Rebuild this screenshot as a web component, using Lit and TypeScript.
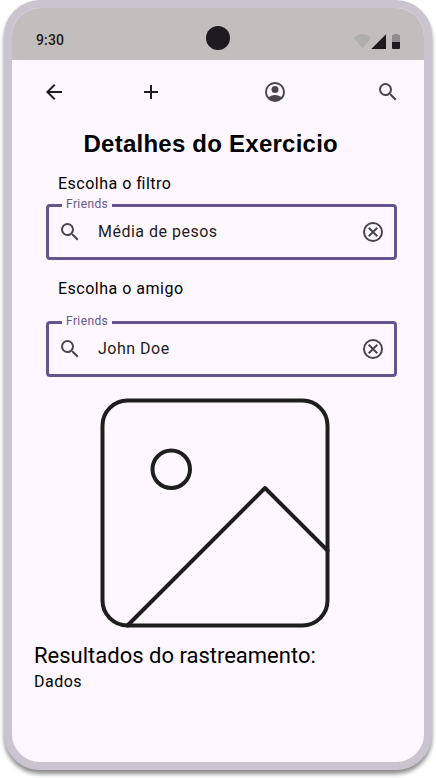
import { LitElement, html, css, svg } from "lit";
import { customElement, property } from "lit/decorators.js";

const searchIcon = svg`<path d="M15.5 14h-.79l-.28-.27A6.47 6.47 0 0 0 16 9.5 6.5 6.5 0 1 0 9.5 16c1.61 0 3.09-.59 4.23-1.57l.27.28v.79l5 4.99L20.49 19l-4.99-5zm-6 0C7.01 14 5 11.99 5 9.5S7.01 5 9.5 5 14 7.01 14 9.5 11.99 14 9.5 14z"/>`;

@customElement("outlined-field")
export class OutlinedField extends LitElement {
  @property() label = "";
  @property() value = "";

  static styles = css`
    :host {
      display: block;
      font-family: Roboto, sans-serif;
    }
    .box {
      position: relative;
      box-sizing: border-box;
      height: 56px;
      border: 3px solid #65558f;
      border-radius: 4px;
      display: flex;
      align-items: center;
      padding: 0 9px;
    }
    .label {
      position: absolute;
      left: 13px;
      top: -11px;
      width: 50px;
      box-sizing: border-box;
      padding-left: 4px;
      background: #fef7ff;
      color: #65558f;
      font-size: 12px;
      line-height: 16px;
      letter-spacing: 0.4px;
      white-space: nowrap;
    }
    .icon {
      width: 24px;
      height: 24px;
      fill: #49454f;
      flex: none;
    }
    .value {
      flex: 1;
      margin-left: 16px;
      font-size: 16px;
      line-height: 24px;
      letter-spacing: 0.5px;
      color: #1d1b20;
    }
  `;

  render() {
    return html`
      <div class="box">
        <span class="label">${this.label}</span>
        <svg class="icon" viewBox="0 0 24 24">${searchIcon}</svg>
        <span class="value">${this.value}</span>
        <svg class="icon" viewBox="0 0 24 24">
          <path d="M8.4 17 12 13.4 15.6 17 17 15.6 13.4 12 17 8.4 15.6 7 12 10.6 8.4 7 7 8.4 10.6 12 7 15.6zM12 22a10 10 0 1 1 0-20 10 10 0 0 1 0 20zm0-2a8 8 0 1 0 0-16 8 8 0 0 0 0 16z" fill-rule="evenodd"/>
        </svg>
      </div>
    `;
  }
}

@customElement("app-root")
export class AppRoot extends LitElement {
  static styles = css`
    :host {
      display: block;
      height: 778px;
      overflow: hidden;
      background: #fff;
      font-family: Roboto, sans-serif;
      color: #000;
    }
    .phone {
      box-sizing: border-box;
      width: 428px;
      height: 770px;
      margin: 0 4px;
      border: 8px solid #cac4d0;
      border-radius: 36px;
      background: #fef7ff;
      box-shadow: 0 4px 4px rgba(0, 0, 0, 0.45);
    }
    .screen {
      height: 100%;
      border-radius: 28px;
      overflow: hidden;
      display: flex;
      flex-direction: column;
    }
    .status {
      flex: none;
      height: 52px;
      box-sizing: border-box;
      padding: 18px 24px 10px;
      background: #c2bebd;
      display: grid;
      grid-template-columns: 1fr 24px 1fr;
      align-items: start;
    }
    .time {
      font-size: 14px;
      line-height: 20px;
      letter-spacing: 0.14px;
      font-weight: 500;
      color: #1d1b20;
      padding-top: 4px;
    }
    .camera {
      width: 24px;
      height: 24px;
      border-radius: 50%;
      background: #1d1b20;
    }
    .signals {
      justify-self: end;
      width: 46px;
      height: 17px;
      margin-top: 7px;
    }
    .bar {
      flex: none;
      height: 64px;
      box-sizing: border-box;
      padding: 0 24px 0 30px;
      display: flex;
      align-items: center;
    }
    .bar svg {
      width: 24px;
      height: 24px;
      fill: #49454f;
    }
    .bar .dark {
      fill: #1d1b20;
    }
    .plus {
      margin-left: 73px;
    }
    .person {
      margin-left: 100px;
    }
    .find {
      margin-left: 89px;
    }
    h1 {
      margin: 4px 0 0 71.5px;
      font: bold 24px/32px "Liberation Sans", Arial, sans-serif;
      letter-spacing: 0.24px;
      white-space: nowrap;
    }
    .prompt {
      margin: 12px 0 8px 46px;
      font-size: 16px;
      line-height: 24px;
      letter-spacing: 0.5px;
    }
    .prompt.friend {
      margin: 17px 0 20px 46px;
    }
    .tight {
      letter-spacing: -0.4px;
    }
    outlined-field {
      margin: 0 27px 0 34px;
    }
    .image {
      flex: none;
      width: 230px;
      height: 230px;
      margin: 21px 0 0 88px;
      fill: none;
      stroke: #1e1e1e;
      stroke-width: 4;
      stroke-linecap: round;
      stroke-linejoin: round;
    }
    h2 {
      margin: 14px 0 0 22px;
      font-size: 22px;
      line-height: 28px;
      font-weight: 400;
    }
    .data {
      margin: 0 0 0 22px;
      font-size: 16px;
      line-height: 24px;
      letter-spacing: 0.5px;
    }
  `;

  render() {
    return html`
      <div class="phone">
        <div class="screen">
          <div class="status">
            <span class="time">9:30</span>
            <span class="camera"></span>
            <svg class="signals" viewBox="0 0 46 17">
              <path d="M0 4.8C2.4 2.4 5.4 1 8.5 1s6.1 1.4 8.5 3.8L8.5 15.4z" fill="#aeaeac"/>
              <path d="M17.5 16V15.7L32 1.2V16z" fill="#1d1b20"/>
              <path d="M38 9V3q0-1 1-1h1V1h4v1h1q1 0 1 1v6z" fill="#1d1b20" opacity=".3"/>
              <path d="M38 9h8v6q0 1-1 1h-6q-1 0-1-1z" fill="#1d1b20"/>
            </svg>
          </div>
          <div class="bar">
            <svg class="dark" viewBox="0 0 24 24">
              <path d="M7.825 13 13.425 18.6 12 20 4 12 12 4 13.425 5.4 7.825 11H20V13z"/>
            </svg>
            <svg class="dark plus" viewBox="0 0 24 24">
              <path d="M11 13H5V11H11V5H13V11H19V13H13V19H11z"/>
            </svg>
            <svg class="person" viewBox="0 0 24 24">
              <path d="M5.85 17.1A9.81 9.81 0 0 1 12 15a9.81 9.81 0 0 1 6.15 2.1A7.7 7.7 0 0 0 20 12c0-4.42-3.58-8-8-8s-8 3.58-8 8c0 1.95.69 3.72 1.85 5.1zM12 13a3.5 3.5 0 1 1 0-7 3.5 3.5 0 0 1 0 7zm0 9a10 10 0 1 1 0-20 10 10 0 0 1 0 20z"/>
            </svg>
            <svg class="find" viewBox="0 0 24 24">${searchIcon}</svg>
          </div>
          <h1>Detalhes do Exercicio</h1>
          <div class="prompt">Escolha o <span class="tight">f</span>iltro</div>
          <outlined-field label="Friends" value="Média de pesos"></outlined-field>
          <div class="prompt friend">Escolha o amigo</div>
          <outlined-field label="Friends" value="John Doe"></outlined-field>
          <svg class="image" viewBox="0 0 230 230">
            <rect x="2.5" y="2.5" width="225" height="225" rx="25"/>
            <circle cx="71.25" cy="71.25" r="18.75"/>
            <path d="M227.5 152.5 165 90 27.5 227.5"/>
          </svg>
          <h2>Resultados do rastreamento:</h2>
          <div class="data">Dados</div>
        </div>
      </div>
    `;
  }
}
